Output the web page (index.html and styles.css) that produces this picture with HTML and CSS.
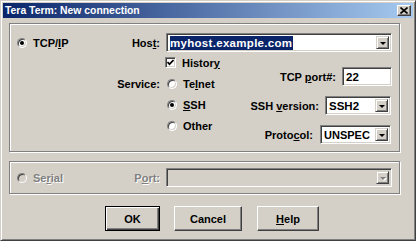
FILE: index.html
```html
<!DOCTYPE html>
<html>

<head>
  <title>Tera Term: New connection</title>
  <meta name="viewport" content="width=device-width, initial-scale=1.0">
  <link rel="stylesheet" href="styles.css">
</head>

<body>
  <div class="dialog">
    <div class="titlebar">
      <span class="title">Tera Term: New connection</span>
      <span class="close">
        <svg width="8" height="7" viewBox="0 0 8 7"><path d="M0.5 0.5 L7.5 6.5 M7.5 0.5 L0.5 6.5" stroke="#000" stroke-width="1.6" fill="none"/></svg>
      </span>
    </div>

    <div class="content">
      <div class="group tcp">
        <div class="lead">
          <span class="opt"><span class="radio on"></span>TCP/<u>I</u>P</span>
          <span class="lbl">Hos<u>t</u>:</span>
        </div>
        <div class="combo host">
          <span class="value"><span class="sel">myhost.example.com</span></span>
          <span class="drop"><span class="arrow"></span></span>
        </div>

        <span class="lbl service">Service:</span>
        <span class="opt history">
          <span class="check"><svg width="7" height="7" viewBox="0 0 7 7"><path d="M0.5 3 L2.5 5.2 L6.5 1" stroke="#000" stroke-width="1.7" fill="none"/></svg></span>Histor<u>y</u>
        </span>
        <span class="opt telnet"><span class="radio"></span>Te<u>l</u>net</span>
        <span class="opt ssh"><span class="radio on"></span><u>S</u>SH</span>
        <span class="opt other"><span class="radio"></span>Other</span>

        <div class="settings">
          <div class="field">
            <span class="lbl">TCP <u>p</u>ort#:</span>
            <span class="edit port">22</span>
          </div>
          <div class="field">
            <span class="lbl">SSH <u>v</u>ersion:</span>
            <div class="combo version">
              <span class="value">SSH2</span>
              <span class="drop"><span class="arrow"></span></span>
            </div>
          </div>
          <div class="field">
            <span class="lbl">Proto<u>c</u>ol:</span>
            <div class="combo protocol">
              <span class="value">UNSPEC</span>
              <span class="drop"><span class="arrow"></span></span>
            </div>
          </div>
        </div>
      </div>

      <div class="group serial disabled">
        <div class="lead">
          <span class="opt"><span class="radio"></span>Se<u>r</u>ial</span>
          <span class="lbl">P<u>o</u>rt:</span>
        </div>
        <div class="combo port-list">
          <span class="value"></span>
          <span class="drop"><span class="arrow"></span></span>
        </div>
      </div>

      <div class="buttons">
        <button class="btn default ok">OK</button>
        <button class="btn cancel">Cancel</button>
        <button class="btn help"><u>H</u>elp</button>
      </div>
    </div>
  </div>
</body>

</html>
```

FILE: styles.css
```css
body {
  margin: 0;
  font-family: "Liberation Sans", Arial, sans-serif;
  font-size: 11px;
  font-weight: bold;
  color: #000;
  background: #d4d0c8;
}

u {
  text-underline-offset: 1px;
}

.dialog {
  width: 416px;
  height: 241px;
  box-sizing: border-box;
  border: 1px solid;
  border-color: #d4d0c8 #404040 #404040 #d4d0c8;
  box-shadow: inset 1px 1px #fff, inset -1px -1px #808080;
  padding: 2px;
  background: #d4d0c8;
  overflow: hidden;
}

.titlebar {
  height: 15px;
  display: flex;
  align-items: center;
  justify-content: space-between;
  padding: 0 2px 0 2px;
  background: linear-gradient(to right, #0a246a, #a6caf0);
}

.title {
  color: #fff;
  font-size: 10.4px;
}

.close {
  width: 14px;
  height: 11px;
  box-sizing: border-box;
  display: flex;
  align-items: center;
  justify-content: center;
  background: #d4d0c8;
  border: 1px solid;
  border-color: #fff #404040 #404040 #fff;
  box-shadow: inset -1px -1px #808080;
}

.content {
  padding: 5px 0 0 6px;
}

/* etched group boxes */
.group {
  width: 391px;
  box-sizing: border-box;
  border: 1px solid #808080;
  box-shadow: inset 1px 1px #fff, 1px 1px #fff;
  display: grid;
  grid-template-columns: 143px 226px;
  column-gap: 6px;
  padding: 0 7px;
}

.tcp {
  height: 129px;
  padding-top: 9px;
  grid-template-rows: 19px repeat(4, 21px);
  align-content: start;
}

.serial {
  height: 33px;
  margin-top: 9px;
  padding-top: 6px;
  grid-template-rows: 19px;
}

.lead {
  grid-column: 1;
  grid-row: 1;
  display: flex;
  align-items: center;
  justify-content: space-between;
}

.lbl {
  white-space: nowrap;
}

.opt {
  display: flex;
  align-items: center;
  white-space: nowrap;
}

.service {
  grid-column: 1;
  grid-row: 3;
  justify-self: end;
  align-self: center;
}

.history { grid-column: 2; grid-row: 2; margin-left: -1px; }
.telnet { grid-column: 2; grid-row: 3; }
.ssh { grid-column: 2; grid-row: 4; }
.other { grid-column: 2; grid-row: 5; }

.telnet .radio,
.ssh .radio,
.other .radio {
  margin-left: 1px;
}

.radio {
  width: 10px;
  height: 10px;
  box-sizing: border-box;
  border-radius: 50%;
  border: 1px solid;
  border-color: #808080 #fff #fff #808080;
  box-shadow: inset 1px 1px #404040, inset -1px -1px #d4d0c8;
  background: #fff;
  margin-right: 6px;
  display: flex;
  align-items: center;
  justify-content: center;
}

.radio.on::after {
  content: "";
  width: 4px;
  height: 4px;
  border-radius: 50%;
  background: #000;
}

.check {
  width: 11px;
  height: 11px;
  box-sizing: border-box;
  border: 1px solid;
  border-color: #808080 #fff #fff #808080;
  box-shadow: inset 1px 1px #404040, inset -1px -1px #d4d0c8;
  background: #fff;
  margin-right: 6px;
  display: flex;
  align-items: center;
  justify-content: center;
}

/* sunken fields */
.combo,
.edit {
  height: 19px;
  box-sizing: border-box;
  border: 1px solid;
  border-color: #808080 #fff #fff #808080;
  box-shadow: inset 1px 1px #404040, inset -1px -1px #d4d0c8;
  background: #fff;
  padding: 2px;
  display: flex;
  align-items: center;
}

.combo .value {
  flex: 1;
  padding-left: 1px;
  font-size: 11.5px;
}

.protocol .value {
  font-size: 11px;
}

.host {
  grid-column: 2;
  grid-row: 1;
}

.sel {
  background: #0a246a;
  color: #fff;
  padding: 1px 1px 1px 0;
  letter-spacing: 0.3px;
}

.drop {
  width: 13px;
  height: 100%;
  box-sizing: border-box;
  background: #d4d0c8;
  border: 1px solid;
  border-color: #d4d0c8 #404040 #404040 #d4d0c8;
  box-shadow: inset 1px 1px #fff, inset -1px -1px #808080;
  display: flex;
  align-items: center;
  justify-content: center;
}

.arrow {
  width: 0;
  height: 0;
  border-top: 3px solid #000;
  border-left: 3px solid transparent;
  border-right: 3px solid transparent;
  margin-top: 1px;
}

.settings {
  grid-column: 2;
  grid-row: 2 / 6;
  justify-self: end;
  align-self: start;
  padding-top: 15px;
  display: flex;
  flex-direction: column;
  align-items: flex-end;
  gap: 10px;
}

.field {
  display: flex;
  align-items: center;
  gap: 6px;
}

.field:nth-child(2) {
  margin-right: 1px;
}

.field:nth-child(3) {
  margin-right: 1px;
  gap: 7px;
}

.port {
  width: 50px;
  font-size: 11.5px;
  padding-left: 3px;
}

.version {
  width: 66px;
}

.protocol {
  width: 71px;
}

/* disabled serial group */
.disabled .opt,
.disabled .lbl {
  color: #808080;
  text-shadow: 1px 1px #fff;
}

.disabled .radio {
  background: #d4d0c8;
}

.disabled .combo {
  grid-column: 2;
  grid-row: 1;
  background: #d4d0c8;
}

.disabled .arrow {
  border-top-color: #808080;
  filter: drop-shadow(1px 1px 0 #fff);
}

/* push buttons */
.buttons {
  display: flex;
  margin-top: 12px;
  padding-left: 96px;
  gap: 14px;
}

.btn {
  height: 25px;
  padding: 0;
  font-family: inherit;
  font-size: 11px;
  font-weight: bold;
  color: #000;
  background: #d4d0c8;
  border: 1px solid;
  border-color: #fff #404040 #404040 #fff;
  box-shadow: inset -1px -1px #808080;
}

.btn.default {
  border: 1px solid #000;
  box-shadow: inset 1px 1px #fff, inset -1px -1px #404040, inset -2px -2px #808080;
}

.ok { width: 55px; }
.cancel { width: 68px; }
.help { width: 62px; margin-left: 1px; }
```
